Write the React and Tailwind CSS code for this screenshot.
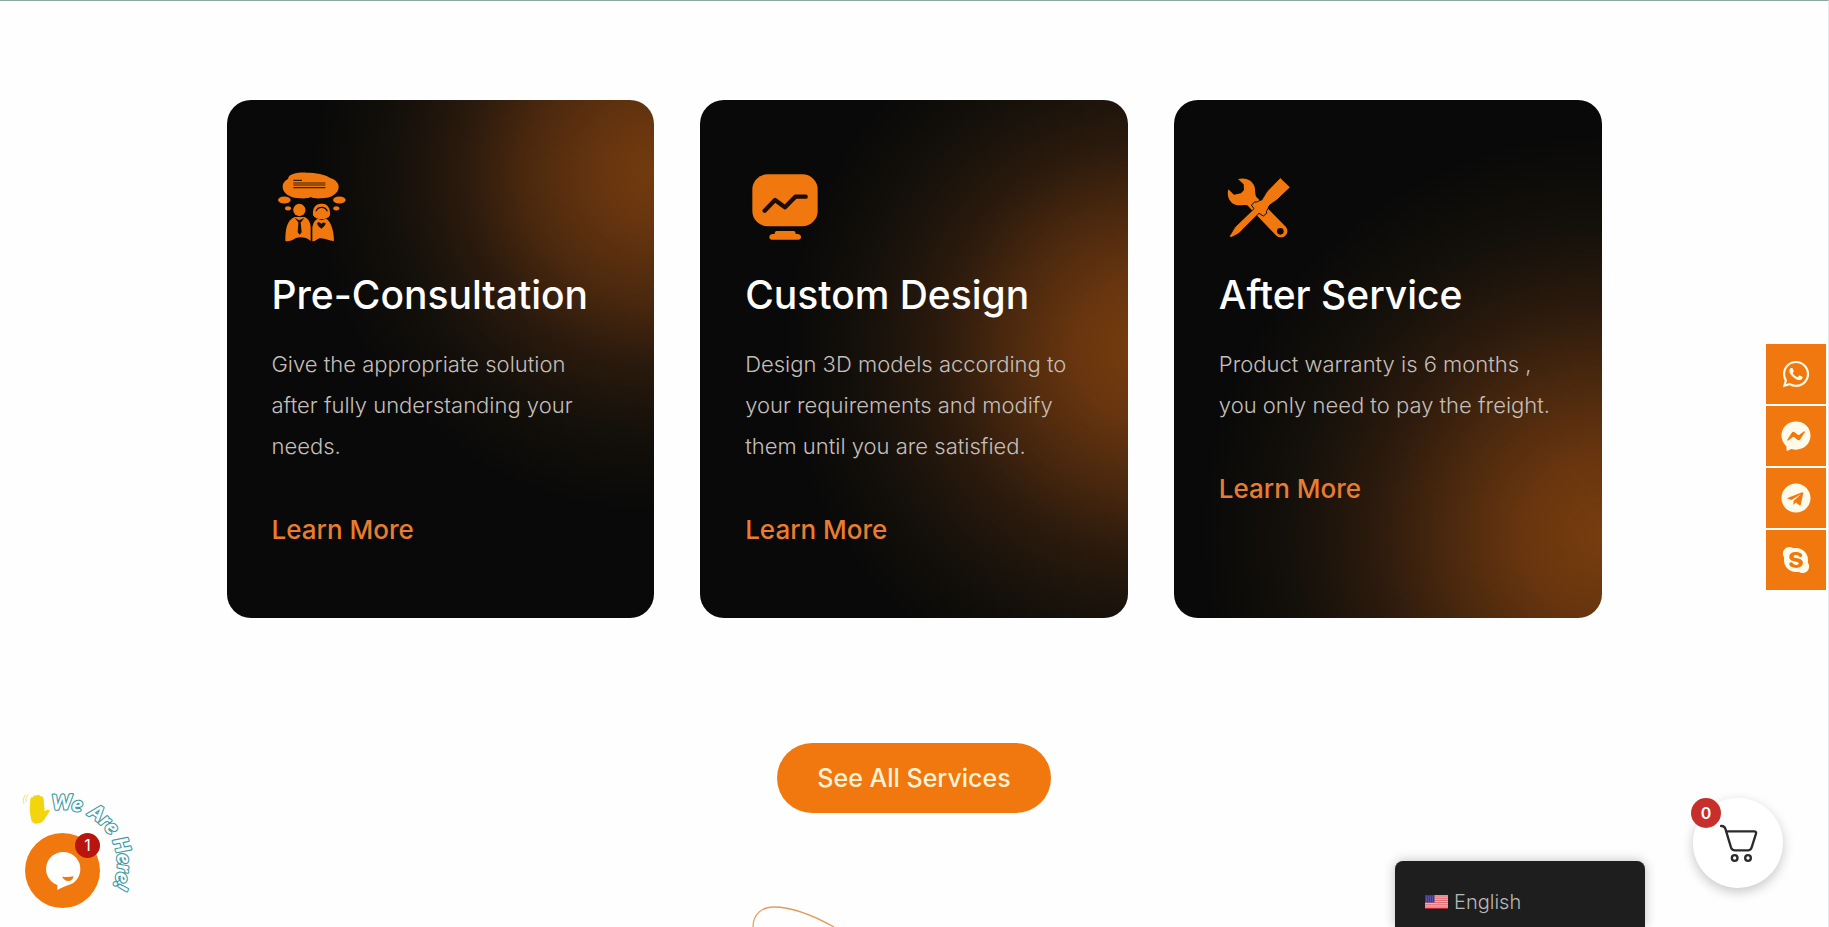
import React from 'react';
import { FaWhatsapp, FaFacebookMessenger, FaTelegram, FaSkype } from 'react-icons/fa';

function ConsultationIcon() {
  return (
    <svg viewBox="36 12 240 240" className="w-20 h-20" fill="#f1780f" aria-hidden="true">
      <path d="M84 57C86 41 112 37 140 38C168 38 194 43 209 53C226 58 236 68 236 81C236 100 214 115 184 115C170 116 160 115 152 111C144 115 134 116 120 115C90 114 68 100 68 80C68 69 76 61 84 57Z" />
      <path d="M100 61H126M100 69H196M100 75H196M100 83H196" stroke="#3d2008" strokeWidth="3.5" />
      <ellipse cx="73" cy="120" rx="19" ry="10.5" />
      <ellipse cx="238" cy="120" rx="19" ry="10.5" />
      <ellipse cx="84" cy="145" rx="9" ry="6.5" />
      <ellipse cx="229" cy="145" rx="9" ry="6.5" />
      <circle cx="118" cy="150" r="18.5" />
      <path d="M159 166C157 142 168 130 185 131C202 130 212 144 210 166C202 182 168 182 159 166Z" />
      <path d="M168 154C174 138 196 138 202 154" fill="none" stroke="#1c0f05" strokeWidth="4" />
      <path d="M76 243C76 210 80 180 104 171H134C148 177 152 192 152 202V243C140 232 122 230 108 234C94 242 84 246 76 243Z" />
      <path d="M157 243V202C160 188 164 180 174 176L185 181L198 176C214 184 222 216 222 243C204 242 192 232 178 235C168 240 162 246 157 243Z" />
      <path d="M104 173L118 181L133 173L124 186H114ZM115 186H122L125 217L119 224L113 217Z" fill="#1c0f05" />
      <path d="M171 189C176 184 181 188 184 191C188 187 194 186 197 190C196 197 190 202 184 206C178 202 172 197 171 189Z" fill="#1c0f05" />
    </svg>
  );
}

function DesignIcon() {
  return (
    <svg viewBox="165 222 240 240" className="w-20 h-20" fill="#f1780f" aria-hidden="true">
      <rect x="187" y="253" width="196" height="156" rx="46" />
      <path d="M224 362L255 330L285 352L316 320H347" fill="none" stroke="#1c0c02" strokeWidth="13" strokeLinecap="round" strokeLinejoin="round" />
      <path d="M260 423H311Q317 423 317 432H324Q333 434 333 441Q333 449 324 449H246Q238 449 238 441Q238 434 247 432H254Q254 423 260 423Z" />
    </svg>
  );
}

function ServiceIcon() {
  return (
    <svg viewBox="177 222 240 240" className="w-20 h-20" fill="#f1780f" aria-hidden="true">
      <path d="M234 267C256 261 276 270 283 288C287 300 284 314 290 322L378 411C386 422 382 434 372 440C362 444 352 441 346 434L262 346C250 342 234 350 221 342C206 333 200 314 205 298L222 314L243 310L252 300L251 283Z" />
      <circle cx="361" cy="424" r="10" fill="#0b0a09" />
      <path
        d="M361 263L391 292L352 329C338 340 330 342 326 350C324 360 317 362 320 370L310 378L297 370L245 422C238 432 226 436 213 443L208 438C216 428 222 412 230 406L282 356L274 345L284 336C290 338 296 332 305 330C312 320 316 310 324 301Z"
        stroke="#0b0a09"
        strokeWidth="3"
      />
    </svg>
  );
}

const services = [
  {
    title: 'Pre-Consultation',
    lines: ['Give the appropriate solution', 'after fully understanding your', 'needs.'],
    icon: ConsultationIcon,
    glow: 'bg-[radial-gradient(circle_at_100%_14%,#733b0e_0px,#65340f_60px,#4c290e_125px,#2b1a0d_190px,#14100a_260px,#090909_340px)]'
  },
  {
    title: 'Custom Design',
    lines: ['Design 3D models according to', 'your requirements and modify', 'them until you are satisfied.'],
    icon: DesignIcon,
    glow: 'bg-[radial-gradient(circle_at_104%_48%,#773d0e_0px,#68350f_70px,#4c290e_135px,#2b1a0d_205px,#14100a_285px,#090909_360px)]'
  },
  {
    title: 'After Service',
    lines: ['Product warranty is 6 months ,', 'you only need to pay the freight.'],
    icon: ServiceIcon,
    glow: 'bg-[radial-gradient(circle_at_100%_84%,#773d0e_0px,#68350f_80px,#4c290e_150px,#2b1a0d_230px,#14100a_310px,#090909_400px)]'
  }
];

const socials = [
  { name: 'WhatsApp', icon: FaWhatsapp },
  { name: 'Messenger', icon: FaFacebookMessenger },
  { name: 'Telegram', icon: FaTelegram },
  { name: 'Skype', icon: FaSkype }
];

function ServiceCard({ service }) {
  const Icon = service.icon;
  return (
    <article className={`flex-1 rounded-3xl px-[45px] pt-16 pb-[70px] ${service.glow}`}>
      <Icon />
      <h3 className="mt-[25px] text-[39px] leading-[52px] font-medium text-white whitespace-nowrap">{service.title}</h3>
      <p className="mt-[23px] text-[22px] leading-[41px] font-light text-[#c4bfba] whitespace-nowrap">
        {service.lines.map(line => (
          <span key={line} className="block">{line}</span>
        ))}
      </p>
      <a href="#" className="mt-[45px] inline-block text-[26px] leading-9 font-medium text-[#e87d30]">Learn More</a>
    </article>
  );
}

function ChatWidget() {
  return (
    <div className="absolute bottom-0 left-0 w-[150px] h-[147px]">
      <svg viewBox="0 0 450 441" className="absolute inset-0 w-full h-full">
        <path d="M91 58Q92 50 99 52Q101 43 109 47Q117 40 121 49Q130 47 131 57L134 94Q140 87 148 90Q151 93 146 98L134 117Q126 131 108 131Q95 130 93 116L89 92Z" fill="#f3d50e" />
        <path d="M84 43Q74 52 79 66M76 44Q65 56 72 72" fill="none" stroke="#f0d860" strokeWidth="2.5" />
        <path id="chatArc" d="M156 92A164 164 0 0 1 331 334" fill="none" />
        <g
          fill="#ffffff"
          stroke="#3f9aa6"
          strokeWidth="7"
          strokeLinejoin="round"
          className="font-['Lato',sans-serif] text-[62px] font-black italic [paint-order:stroke]"
        >
          <text><textPath href="#chatArc">We</textPath></text>
          <text><textPath href="#chatArc" startOffset="108">Are</textPath></text>
          <text><textPath href="#chatArc" startOffset="216">Here!</textPath></text>
        </g>
      </svg>
      <button type="button" aria-label="Open chat" className="absolute left-[25px] top-[53px] w-[75px] h-[75px] rounded-full bg-[#f1780f]">
        <svg viewBox="75 159 225 225" className="w-full h-full">
          <path d="M190 216A51 51 0 0 1 212 313Q196 318 172 330V315A51 51 0 0 1 190 216Z" fill="#ffffff" />
          <path d="M186 290Q204 293 221 289Q218 303 205 303Q192 302 186 290Z" fill="#f1780f" />
        </svg>
        <span className="absolute right-0 top-0 w-[25px] h-[25px] rounded-full bg-[#b9150f] text-white text-base leading-[25px] text-center">1</span>
      </button>
    </div>
  );
}

function CartButton() {
  return (
    <button
      type="button"
      aria-label="Cart"
      className="absolute right-[45px] bottom-[39px] w-[90px] h-[90px] rounded-full bg-white shadow-[0_4px_12px_rgba(0,0,0,0.22)]"
    >
      <svg viewBox="99 54 270 270" className="w-full h-full" fill="none" stroke="#2b2b2b" strokeWidth="7" strokeLinecap="round" strokeLinejoin="round">
        <path d="M183 138Q193 137 196 146L213 202Q216 211 225 211H264Q272 211 275 202L288 161Q290 154 282 154H199" />
        <circle cx="224" cy="234" r="8.5" />
        <circle cx="264" cy="234" r="8.5" />
      </svg>
      <span className="absolute left-[-2px] top-0 w-[30px] h-[30px] rounded-full bg-[#c62f2c] text-white text-base leading-[30px] font-semibold text-center">0</span>
    </button>
  );
}

function FlagIcon() {
  return (
    <svg viewBox="0 0 23 14" className="w-[23px] h-[14px]" aria-hidden="true">
      <rect width="23" height="14" fill="#f3b5b5" />
      <path d="M0 1H23M0 3.2H23M0 5.4H23M0 7.6H23M0 9.8H23M0 12H23" stroke="#e0626a" strokeWidth="1" />
      <path d="M0 13.5H23" stroke="#a8262f" />
      <rect width="9.5" height="7.5" fill="#3c3b94" />
      <path d="M1 2H9M1 4H9M1 6H9" stroke="#7f80c4" strokeWidth="0.7" strokeDasharray="1 1" />
    </svg>
  );
}

function App() {
  return (
    <div className="relative min-h-screen overflow-hidden border-t border-r border-t-[#8fa89e] border-r-gray-200 bg-[#fefefe] font-['Inter',sans-serif]">
      <main className="max-w-[1375px] mx-auto pt-[99px] flex flex-col items-center">
        <section className="w-full flex gap-[46px]">
          {services.map(service => (
            <ServiceCard key={service.title} service={service} />
          ))}
        </section>

        <a href="#" className="mt-[125px] rounded-full bg-[#f1780f] px-10 text-[25px] leading-[70px] font-medium text-[#fff3d6]">
          See All Services
        </a>
      </main>

      {/* Top of the decorative loop in the next section */}
      <svg viewBox="0 0 100 22" className="absolute left-[750px] bottom-0 w-[100px] h-[22px]" fill="none" stroke="#e59a5c" strokeWidth="1.3">
        <path d="M3 22C3 9 12 2 24 2C44 2 66 12 84 22" />
      </svg>

      {/* Social links */}
      <nav className="absolute right-[2px] top-[343px] flex flex-col gap-[2px]">
        {socials.map(({ name, icon: Icon }) => (
          <a key={name} href="#" aria-label={name} className="flex w-[60px] h-[60px] items-center justify-center bg-[#f1780f] text-[#fffbea]">
            <Icon size={30} />
          </a>
        ))}
      </nav>

      <ChatWidget />
      <CartButton />

      {/* Language switcher */}
      <button
        type="button"
        className="absolute right-[183px] bottom-0 flex w-[250px] h-[66px] items-center gap-[6px] rounded-t-lg bg-[#1e1e1e] pl-[30px] pt-4 text-xl text-[#b8b8b8] font-light shadow-[0_0_12px_rgba(0,0,0,0.25)]"
      >
        <FlagIcon />
        English
      </button>
    </div>
  );
}

export default App;
